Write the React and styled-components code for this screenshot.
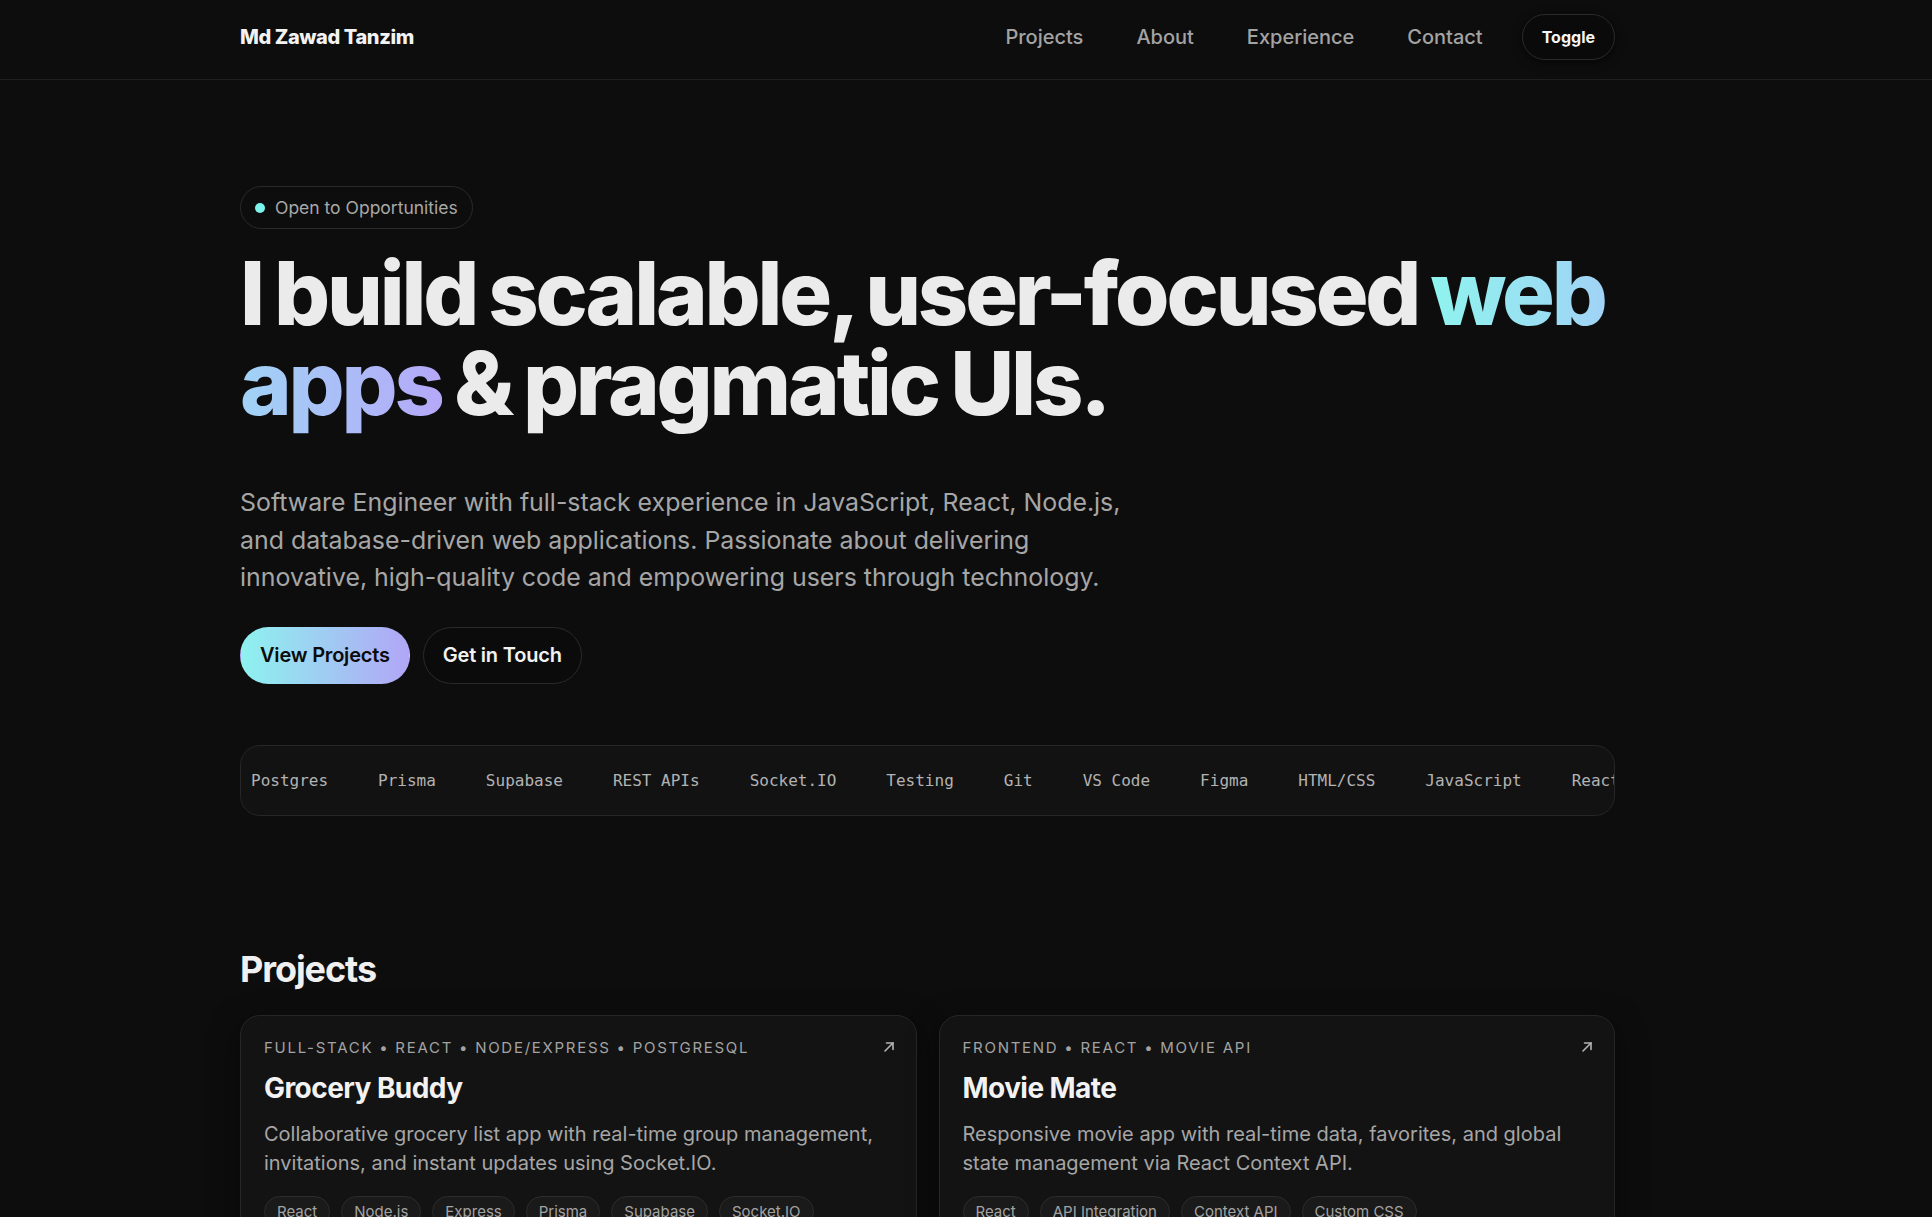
import React from 'react'
import styled, { createGlobalStyle } from 'styled-components'

const GlobalStyle = createGlobalStyle`
html, body {
  margin: 0;
  padding: 0;
  background: #0d0d0d;
  scrollbar-width: none;
}
body::-webkit-scrollbar { display: none; }
* { box-sizing: border-box; }
body {
  font-family: Inter, "Noto Sans", sans-serif;
  color: #ececec;
  -webkit-font-smoothing: antialiased;
}
`

const Page = styled.div`
min-height: 100vh;
background: #0d0d0d;
overflow: hidden;
`

const HeaderBar = styled.header`
border-bottom: 1px solid #1f1f1f;
padding-bottom: 5px;
`

const Shell = styled.div`
padding: 0 240px;
`

const Inner = styled.div`
max-width: 1375px;
`

const NavRow = styled(Inner)`
height: 74px;
display: flex;
align-items: center;
justify-content: space-between;
`

const Logo = styled.a`
font-size: 20px;
font-weight: 800;
letter-spacing: -0.02em;
color: #f2f2f2;
`

const Nav = styled.nav`
display: flex;
align-items: center;
gap: 53px;
`

const NavLink = styled.a`
font-size: 20px;
font-weight: 500;
color: #a3a3a3;
`

const Toggle = styled.button`
margin-left: -14px;
height: 46px;
padding: 0 19px;
border-radius: 999px;
border: 1px solid #2b2b2b;
background: #0a0a0a;
color: #f5f5f5;
font-family: Inter, sans-serif;
font-size: 16px;
font-weight: 700;
box-shadow: 0 2px 10px rgba(0,0,0,0.6);
`

const Hero = styled(Inner)`
padding-top: 106px;
`

const Badge = styled.div`
display: inline-flex;
align-items: center;
gap: 10px;
height: 43px;
padding: 0 14px;
border: 1px solid #2a2a2a;
border-radius: 999px;
font-size: 17.5px;
color: #a8a8a8;
`

const Dot = styled.span`
width: 10px;
height: 10px;
border-radius: 50%;
background: #7ef3ec;
`

const Headline = styled.h1`
margin: 19px 0 0;
font-size: 88px;
line-height: 90px;
font-weight: 800;
letter-spacing: -0.036em;
word-spacing: -4px;
color: #ebebeb;
`

const Gradient = styled.span`
background: linear-gradient(90deg, #8ff4ee 0%, #a2d0f6 50%, #b5a8f8 100%);
-webkit-background-clip: text;
background-clip: text;
color: transparent;
`

const Lead = styled.p`
margin: 56px 0 0;
max-width: 900px;
font-size: 24.9px;
line-height: 37.5px;
color: #a6a6a6;
`

const Actions = styled.div`
display: flex;
gap: 13px;
margin-top: 30px;
`

const Button = styled.a`
display: inline-flex;
align-items: center;
height: 57px;
padding: 0 19px;
border-radius: 999px;
font-size: 20px;
font-weight: 600;
letter-spacing: -0.01em;
color: ${({ $primary }) => ($primary ? '#0b0b0b' : '#f2f2f2')};
background: ${({ $primary }) =>
  $primary ? 'linear-gradient(90deg, #8ef2ef, #b1a6f6)' : '#0b0b0b'};
border: 1px solid ${({ $primary }) => ($primary ? 'transparent' : '#2a2a2a')};
`

const Marquee = styled.div`
margin-top: 61px;
height: 71px;
display: flex;
align-items: center;
overflow: hidden;
border: 1px solid #262626;
border-radius: 20px;
background: #121212;
padding-left: 10px;
`

const Skill = styled.span`
flex: none;
margin-right: 50px;
font-family: "DejaVu Sans Mono", "Liberation Mono", monospace;
font-size: 16px;
color: #b3b3b3;
`

const Section = styled(Inner)`
padding-top: 132px;
`

const SectionTitle = styled.h2`
margin: 0;
font-size: 36px;
line-height: 43px;
font-weight: 700;
letter-spacing: -0.03em;
color: #f0f0f0;
`

const Grid = styled.div`
margin-top: 24px;
display: grid;
grid-template-columns: 1fr 1fr;
gap: 22px;
`

const Card = styled.article`
position: relative;
padding: 22px 23px 24px;
border: 1px solid #262626;
border-radius: 20px;
background: #131313;
box-shadow: 0 10px 30px rgba(0,0,0,0.5);
`

const Arrow = styled.svg`
position: absolute;
top: 24px;
right: 20px;
`

const Meta = styled.div`
font-size: 15px;
line-height: 20px;
letter-spacing: 0.115em;
text-transform: uppercase;
color: #a3a3a3;
`

const CardTitle = styled.h3`
margin: 13px 0 0;
font-size: 28px;
line-height: 34px;
font-weight: 700;
letter-spacing: -0.02em;
color: #f2f2f2;
`

const Desc = styled.p`
margin: 15px 0 0;
font-size: 20px;
line-height: 29px;
color: #a6a6a6;
`

const Tags = styled.div`
margin-top: 18px;
display: flex;
flex-wrap: wrap;
gap: 11px;
`

const Tag = styled.span`
padding: 5px 12px;
border: 1px solid #2c2c2c;
border-radius: 999px;
background: #1a1a1a;
font-size: 15px;
color: #a3a3a3;
`

const skills = [
  'Postgres', 'Prisma', 'Supabase', 'REST APIs', 'Socket.IO', 'Testing', 'Git',
  'VS Code', 'Figma', 'HTML/CSS', 'JavaScript', 'React', 'Node.js', 'Express',
]

const projects = [
  {
    meta: 'Full-stack • React • Node/Express • PostgreSQL',
    title: 'Grocery Buddy',
    desc: 'Collaborative grocery list app with real-time group management, invitations, and instant updates using Socket.IO.',
    tags: ['React', 'Node.js', 'Express', 'Prisma', 'Supabase', 'Socket.IO'],
  },
  {
    meta: 'Frontend • React • Movie API',
    title: 'Movie Mate',
    desc: 'Responsive movie app with real-time data, favorites, and global state management via React Context API.',
    tags: ['React', 'API Integration', 'Context API', 'Custom CSS'],
  },
]

const ArrowIcon = () => (
  <Arrow width="14" height="14" viewBox="0 0 14 14" fill="none" stroke="#b5b5b5" strokeWidth="1.6" strokeLinecap="round">
    <path d="M3 11 L11 3" />
    <path d="M4.5 3 H11 V9.5" />
  </Arrow>
)

export default function App() {
  return (
    <Page>
      <GlobalStyle />
      <HeaderBar>
        <Shell>
          <NavRow>
            <Logo>Md Zawad Tanzim</Logo>
            <Nav>
              <NavLink>Projects</NavLink>
              <NavLink>About</NavLink>
              <NavLink>Experience</NavLink>
              <NavLink>Contact</NavLink>
              <Toggle>Toggle</Toggle>
            </Nav>
          </NavRow>
        </Shell>
      </HeaderBar>

      <Shell>
        <Hero>
          <Badge>
            <Dot />
            Open to Opportunities
          </Badge>
          <Headline>
            I build scalable, user-focused <Gradient>web apps</Gradient> &amp; pragmatic UIs.
          </Headline>
          <Lead>
            Software Engineer with full-stack experience in JavaScript, React, Node.js,
            and database-driven web applications. Passionate about delivering
            innovative, high-quality code and empowering users through technology.
          </Lead>
          <Actions>
            <Button $primary>View Projects</Button>
            <Button>Get in Touch</Button>
          </Actions>
          <Marquee>
            {skills.map((s) => (
              <Skill key={s}>{s}</Skill>
            ))}
          </Marquee>
        </Hero>

        <Section>
          <SectionTitle>Projects</SectionTitle>
          <Grid>
            {projects.map((p) => (
              <Card key={p.title}>
                <ArrowIcon />
                <Meta>{p.meta}</Meta>
                <CardTitle>{p.title}</CardTitle>
                <Desc>{p.desc}</Desc>
                <Tags>
                  {p.tags.map((t) => (
                    <Tag key={t}>{t}</Tag>
                  ))}
                </Tags>
              </Card>
            ))}
          </Grid>
        </Section>
      </Shell>
    </Page>
  )
}
